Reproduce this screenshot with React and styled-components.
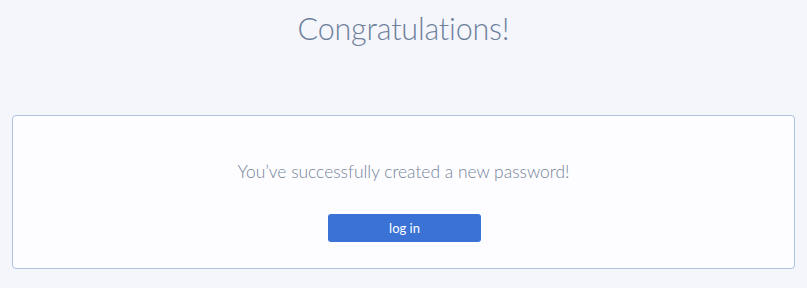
import styled, { createGlobalStyle } from "styled-components";

const GlobalStyle = createGlobalStyle`
  * {
    box-sizing: border-box;
  }

  body {
    margin: 0;
    background: #f4f6fb;
    font-family: Lato, "Open Sans", sans-serif;
  }
`;

export default function App() {
  return (
    <>
      <GlobalStyle />
      <Page>
        <Title>Congratulations!</Title>
        <Card>
          <Message>You’ve successfully created a new password!</Message>
          <LoginButton type="button">log in</LoginButton>
        </Card>
      </Page>
    </>
  );
}

const Page = styled.div`
  width: 100%;
  height: 288px;
  display: flex;
  flex-direction: column;
  align-items: center;
  padding: 8px 12px 0 12px;
`;

const Title = styled.h1`
  margin: 0;
  font-size: 30.5px;
  line-height: 40px;
  font-weight: 300;
  color: #6e809c;
  letter-spacing: -0.2px;
`;

const Card = styled.div`
  width: 783px;
  height: 154px;
  margin-top: 67px;
  background: #fdfdff;
  border: 1px solid #aec3de;
  border-radius: 4px;
  display: flex;
  flex-direction: column;
  align-items: center;
  padding-top: 44px;
`;

const Message = styled.p`
  margin: 0;
  font-size: 17.4px;
  line-height: 24px;
  font-weight: 300;
  color: #76849a;
`;

const LoginButton = styled.button`
  width: 153px;
  height: 28px;
  margin-top: 30px;
  margin-left: 2px;
  border: none;
  border-radius: 3px;
  background: #3a72d6;
  color: #ffffff;
  font-family: Lato, "Open Sans", sans-serif;
  font-size: 13px;
  cursor: pointer;
`;
